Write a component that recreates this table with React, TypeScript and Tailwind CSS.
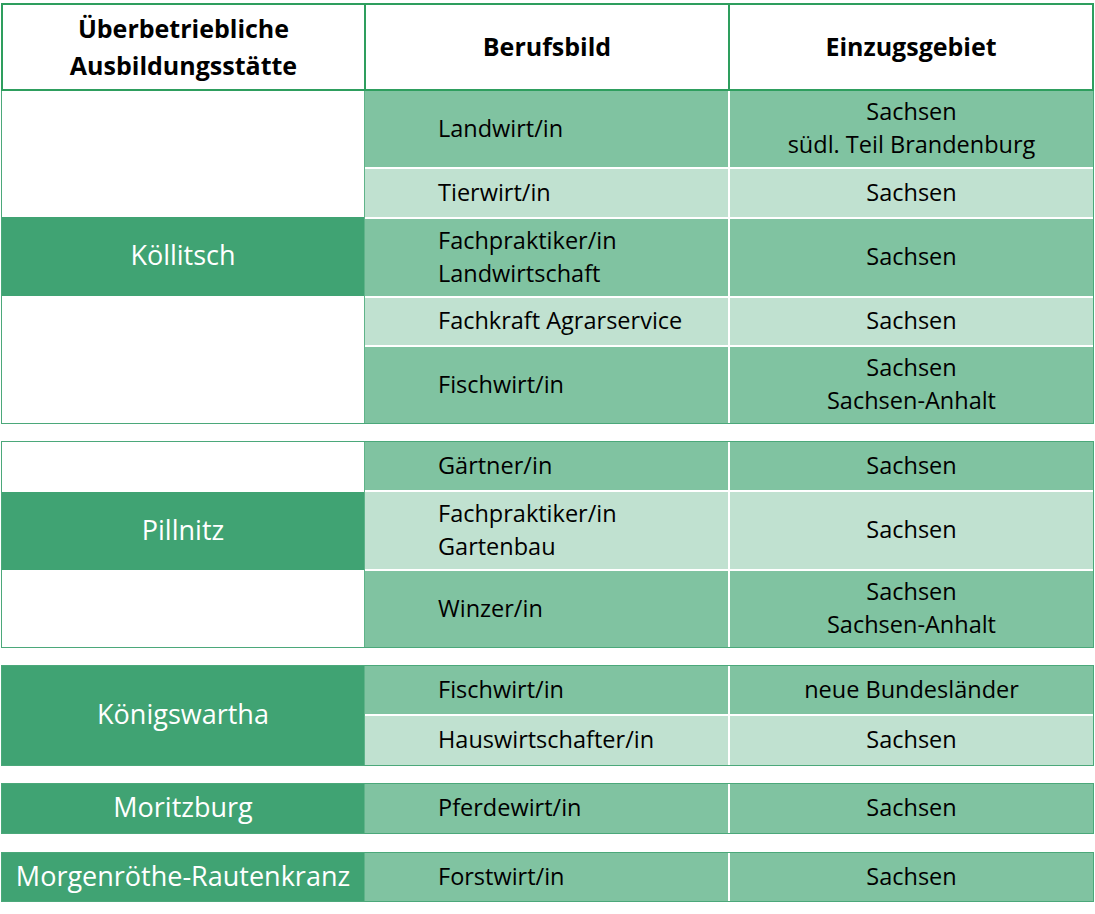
const DARK = "bg-[#40a373]";

type Row = { beruf: string[]; gebiet: string[]; h: number; tone: "mid" | "light" };
type Seg = { h: number; label?: string };
type Group = { rows: Row[]; left: Seg[]; mt: string };

const groups: Group[] = [
  {
    mt: "mt-0",
    rows: [
      { beruf: ["Landwirt/in"], gebiet: ["Sachsen", "südl. Teil Brandenburg"], h: 76, tone: "mid" },
      { beruf: ["Tierwirt/in"], gebiet: ["Sachsen"], h: 48, tone: "light" },
      { beruf: ["Fachpraktiker/in", "Landwirtschaft"], gebiet: ["Sachsen"], h: 77, tone: "mid" },
      { beruf: ["Fachkraft Agrarservice"], gebiet: ["Sachsen"], h: 47, tone: "light" },
      { beruf: ["Fischwirt/in"], gebiet: ["Sachsen", "Sachsen-Anhalt"], h: 76, tone: "mid" },
    ],
    left: [{ h: 126 }, { h: 79, label: "Köllitsch" }, { h: 127 }],
  },
  {
    mt: "mt-[17px]",
    rows: [
      { beruf: ["Gärtner/in"], gebiet: ["Sachsen"], h: 48, tone: "mid" },
      { beruf: ["Fachpraktiker/in", "Gartenbau"], gebiet: ["Sachsen"], h: 77, tone: "light" },
      { beruf: ["Winzer/in"], gebiet: ["Sachsen", "Sachsen-Anhalt"], h: 76, tone: "mid" },
    ],
    left: [{ h: 50 }, { h: 78, label: "Pillnitz" }, { h: 77 }],
  },
  {
    mt: "mt-[17px]",
    rows: [
      { beruf: ["Fischwirt/in"], gebiet: ["neue Bundesländer"], h: 48, tone: "mid" },
      { beruf: ["Hauswirtschafter/in"], gebiet: ["Sachsen"], h: 49, tone: "light" },
    ],
    left: [{ h: 99, label: "Königswartha" }],
  },
  {
    mt: "mt-[17px]",
    rows: [{ beruf: ["Pferdewirt/in"], gebiet: ["Sachsen"], h: 49, tone: "mid" }],
    left: [{ h: 49, label: "Moritzburg" }],
  },
  {
    mt: "mt-[18px]",
    rows: [{ beruf: ["Forstwirt/in"], gebiet: ["Sachsen"], h: 48, tone: "mid" }],
    left: [{ h: 48, label: "Morgenröthe-Rautenkranz" }],
  },
];

function Lines({ lines }: { lines: string[] }) {
  return (
    <div className="pb-[2px] leading-[33px]">
      {lines.map((l) => (
        <div key={l}>{l}</div>
      ))}
    </div>
  );
}

function GroupBlock({ g, first }: { g: Group; first: boolean }) {
  return (
    <div className={`${g.mt} flex border border-[#4ba87a] ${first ? "border-t-0" : ""}`}>
      <div className="flex w-[363px] shrink-0 flex-col border-r border-[#5fb389]">
        {g.left.map((s, i) =>
          s.label ? (
            <div
              key={i}
              style={{ height: s.h }}
              className={`flex items-center justify-center pb-[2px] ${DARK} text-[27px] text-white`}
            >
              {s.label}
            </div>
          ) : (
            <div key={i} style={{ height: s.h }} className="bg-white" />
          )
        )}
      </div>
      <div className="flex flex-1 flex-col gap-[2px] bg-white">
        {g.rows.map((r, i) => {
          const bg = r.tone === "mid" ? "bg-[#80c3a1]" : "bg-[#c0e1d0]";
          return (
            <div key={i} style={{ height: r.h }} className="flex gap-[2px]">
              <div className={`flex w-[363px] items-center pl-[73px] ${bg}`}>
                <Lines lines={r.beruf} />
              </div>
              <div className={`flex flex-1 items-center justify-center text-center ${bg}`}>
                <Lines lines={r.gebiet} />
              </div>
            </div>
          );
        })}
      </div>
    </div>
  );
}

export default function App() {
  return (
    <div className="h-[914px] w-[1095px] bg-white pt-[3px] pl-[1px] font-['Open_Sans','Liberation_Sans',sans-serif] text-[23.5px] text-black">
      <div className="w-[1093px]">
        <div className="flex h-[88px] border-2 border-[#2e9e5e] text-[25px] font-bold">
          <div className="flex w-[363px] items-center justify-center border-r-2 border-[#2e9e5e] text-center leading-[37px]">
            <div>
              <div>Überbetriebliche</div>
              <div>Ausbildungsstätte</div>
            </div>
          </div>
          <div className="flex w-[364px] items-center justify-center border-r-2 border-[#2e9e5e]">
            Berufsbild
          </div>
          <div className="flex flex-1 items-center justify-center">Einzugsgebiet</div>
        </div>
        {groups.map((g, i) => (
          <GroupBlock key={i} g={g} first={i === 0} />
        ))}
      </div>
    </div>
  );
}
